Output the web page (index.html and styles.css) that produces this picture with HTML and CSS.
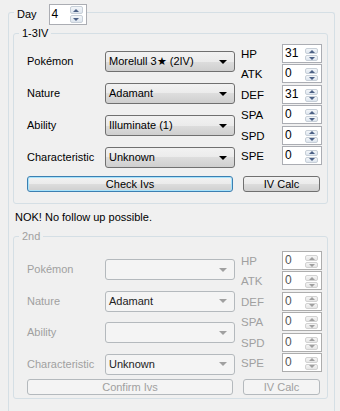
FILE: index.html
```html
<!DOCTYPE html>
<html lang="en">
<head>
  <meta charset="UTF-8">
  <title>IV Checker</title>
  <link rel="stylesheet" href="styles.css">
</head>
<body>
<div class="outer">
  <div class="day-title">
    <span>Day</span>
    <div class="spin day"><span class="val">4</span><span class="arrows"><i class="up"></i><i class="dn"></i></span></div>
  </div>

  <div class="group first">
    <div class="group-title">1-3IV</div>
    <div class="group-body">
      <div class="panel">
        <div class="fields">
          <span>Pokémon</span>
          <div class="combo"><span>Morelull 3★ (2IV)</span><i class="caret"></i></div>
          <span>Nature</span>
          <div class="combo"><span>Adamant</span><i class="caret"></i></div>
          <span>Ability</span>
          <div class="combo"><span>Illuminate (1)</span><i class="caret"></i></div>
          <span>Characteristic</span>
          <div class="combo"><span>Unknown</span><i class="caret"></i></div>
        </div>
        <div class="stats">
          <span>HP</span>
          <div class="spin"><span class="val">31</span><span class="arrows"><i class="up"></i><i class="dn"></i></span></div>
          <span>ATK</span>
          <div class="spin"><span class="val">0</span><span class="arrows"><i class="up"></i><i class="dn"></i></span></div>
          <span>DEF</span>
          <div class="spin"><span class="val">31</span><span class="arrows"><i class="up"></i><i class="dn"></i></span></div>
          <span>SPA</span>
          <div class="spin"><span class="val">0</span><span class="arrows"><i class="up"></i><i class="dn"></i></span></div>
          <span>SPD</span>
          <div class="spin"><span class="val">0</span><span class="arrows"><i class="up"></i><i class="dn"></i></span></div>
          <span>SPE</span>
          <div class="spin"><span class="val">0</span><span class="arrows"><i class="up"></i><i class="dn"></i></span></div>
        </div>
      </div>
      <div class="buttons">
        <button class="btn wide focused">Check Ivs</button>
        <button class="btn calc">IV Calc</button>
      </div>
    </div>
  </div>

  <p class="status">NOK! No follow up possible.</p>

  <div class="group second off">
    <div class="group-title">2nd</div>
    <div class="group-body">
      <div class="panel">
        <div class="fields">
          <span>Pokémon</span>
          <div class="combo"><span></span><i class="caret"></i></div>
          <span>Nature</span>
          <div class="combo filled"><span>Adamant</span><i class="caret"></i></div>
          <span>Ability</span>
          <div class="combo"><span></span><i class="caret"></i></div>
          <span>Characteristic</span>
          <div class="combo filled"><span>Unknown</span><i class="caret"></i></div>
        </div>
        <div class="stats">
          <span>HP</span>
          <div class="spin"><span class="val">0</span><span class="arrows"><i class="up"></i><i class="dn"></i></span></div>
          <span>ATK</span>
          <div class="spin"><span class="val">0</span><span class="arrows"><i class="up"></i><i class="dn"></i></span></div>
          <span>DEF</span>
          <div class="spin"><span class="val">0</span><span class="arrows"><i class="up"></i><i class="dn"></i></span></div>
          <span>SPA</span>
          <div class="spin"><span class="val">0</span><span class="arrows"><i class="up"></i><i class="dn"></i></span></div>
          <span>SPD</span>
          <div class="spin"><span class="val">0</span><span class="arrows"><i class="up"></i><i class="dn"></i></span></div>
          <span>SPE</span>
          <div class="spin"><span class="val">0</span><span class="arrows"><i class="up"></i><i class="dn"></i></span></div>
        </div>
      </div>
      <div class="buttons">
        <button class="btn wide">Confirm Ivs</button>
        <button class="btn calc">IV Calc</button>
      </div>
    </div>
  </div>
</div>
</body>
</html>
```

FILE: styles.css
```css
html, body {
  height: 411px;
  overflow: hidden;
}
body {
  margin: 0;
  background: #f0f0f0;
  font-family: "Liberation Sans", Arial, sans-serif;
  font-size: 11px;
  line-height: 13px;
  color: #000;
}

/* group boxes */
.outer {
  margin: 12px 5px 0 8px;
  padding: 0 6px 0 4px;
  height: 398px;
  border: 1px solid #d5dfe5;
  border-bottom: none;
  border-radius: 3px 3px 0 0;
}
.day-title {
  display: flex;
  align-items: center;
  gap: 12px;
  width: fit-content;
  margin: -9px 0 0 1px;
  padding-left: 3px;
  background: #f0f0f0;
}
.group {
  border: 1px solid #d5dfe5;
  border-radius: 3px;
}
.group.first {
  margin-top: 8px;
}
.group-title {
  width: fit-content;
  margin: -7px 0 0 5px;
  padding: 0 3px;
  background: #f0f0f0;
}
.group-body {
  padding: 4px 0 11px 13px;
}
.second .group-body {
  padding: 8px 0 3px 13px;
}
.panel {
  display: flex;
  align-items: flex-start;
}
.fields {
  display: grid;
  grid-template-columns: 78px 130px;
  grid-auto-rows: 21px;
  row-gap: 11px;
  align-items: center;
  margin-top: 7px;
}
.second .fields {
  margin-top: 8px;
  row-gap: 10.5px;
}
.stats {
  display: grid;
  grid-template-columns: 41px 40px;
  grid-auto-rows: 19px;
  row-gap: 1.4px;
  align-items: center;
  margin-left: 6px;
}
.stats span {
  padding-top: 2px;
  font-size: 11.5px;
}
.status {
  margin: 7px 0 12px 2px;
}

/* combo box */
.combo {
  display: flex;
  align-items: center;
  justify-content: space-between;
  box-sizing: border-box;
  height: 21px;
  padding: 0 7px 0 3px;
  border: 1px solid #707070;
  border-radius: 3px;
  background: linear-gradient(#f2f2f2, #ebebeb 50%, #dddddd 50%, #cfcfcf);
  white-space: nowrap;
}
.caret {
  width: 0;
  height: 0;
  border-left: 4px solid transparent;
  border-right: 4px solid transparent;
  border-top: 4px solid #000;
}

/* numeric up/down */
.spin {
  display: flex;
  box-sizing: border-box;
  width: 40px;
  height: 19px;
  border: 1px solid #abadb3;
  background: #fff;
}
.spin.day {
  width: 38px;
  height: 21px;
}
.spin .val {
  flex: 1;
  padding: 1px 0 0 2px;
  line-height: 14px;
  font-size: 12px;
}
.spin.day .val {
  padding-top: 2px;
}
.arrows {
  display: flex;
  flex-direction: column;
  gap: 1px;
  width: 13px;
  margin: 1px 3px 1px 0;
}
.arrows i {
  flex: 1;
  display: flex;
  align-items: center;
  justify-content: center;
  border: 1px solid #c7cfd8;
  border-radius: 2px;
  background: linear-gradient(#f3f6f9, #dde5ee);
}
.arrows i::after {
  content: "";
  width: 0;
  height: 0;
  border-left: 3px solid transparent;
  border-right: 3px solid transparent;
}
.arrows .up::after {
  border-bottom: 3px solid #4d6185;
}
.arrows .dn::after {
  border-top: 3px solid #4d6185;
}

/* buttons */
.buttons {
  display: flex;
  gap: 10px;
  margin-top: 8px;
}
.second .buttons {
  margin-top: 4px;
}
.btn {
  height: 16px;
  padding: 0;
  border: 1px solid #707070;
  border-radius: 3px;
  background: linear-gradient(#f2f2f2, #ebebeb 50%, #dddddd 50%, #cfcfcf);
  font: inherit;
  line-height: 12px;
  color: #000;
}
.btn.wide {
  width: 206px;
}
.btn.calc {
  width: 77px;
}
.btn.focused {
  border-color: #3c7fb1;
  box-shadow: inset 0 0 0 1px #a8e3fb;
}

/* disabled group */
.off {
  color: #a0a0a0;
}
.off .combo {
  border-color: #b4b9bd;
  background: #f4f4f4;
}
.off .combo.filled {
  color: #222;
}
.off .caret {
  border-top-color: #a0a0a0;
}
.off .spin {
  border-color: #adadad;
  color: #555;
}
.off .arrows i {
  border-color: #d2d2d2;
  background: linear-gradient(#f4f4f4, #e6e6e6);
}
.off .arrows .up::after {
  border-bottom-color: #a0a0a0;
}
.off .arrows .dn::after {
  border-top-color: #a0a0a0;
}
.off .btn {
  border-color: #b4b9bd;
  background: #f4f4f4;
  color: #a0a0a0;
}
```
